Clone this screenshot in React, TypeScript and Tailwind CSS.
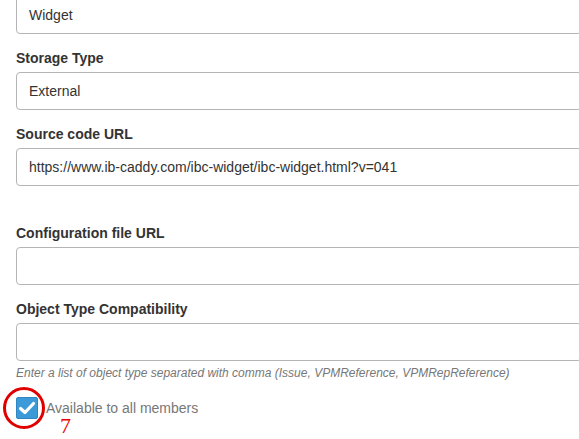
import React from "react";

function Field({ label, value, extraTop = false }: { label: string; value?: string; extraTop?: boolean }) {
  return (
    <div className={extraTop ? "mt-[37px]" : "mt-[14px]"}>
      <div className="text-[14px] leading-[20px] font-bold text-[#333]">{label}</div>
      <div className="mt-[4px] h-[38px] w-[566px] rounded-[4px] border border-[#b5b5b5] bg-white px-[12px] flex items-center text-[14px] text-[#333]">
        {value}
      </div>
    </div>
  );
}

export default function App() {
  return (
    <div
      className="w-[579px] h-[439px] overflow-hidden bg-white relative"
      style={{ fontFamily: '"Liberation Sans", Arial, sans-serif' }}
    >
      <div className="pl-[16px] mt-[-4px]">
        <div className="h-[38px] w-[566px] rounded-[4px] border border-[#b5b5b5] bg-white px-[12px] flex items-center text-[14px] text-[#333]">
          Widget
        </div>
        <Field label="Storage Type" value="External" />
        <Field label="Source code URL" value="https://www.ib-caddy.com/ibc-widget/ibc-widget.html?v=041" />
        <Field label="Configuration file URL" extraTop />
        <Field label="Object Type Compatibility" />
        <div className="mt-[4px] text-[12px] leading-[16px] italic text-[#777]">
          Enter a list of object type separated with comma (Issue, VPMReference, VPMRepReference)
        </div>
        <div className="mt-[16px] flex items-center">
          <div className="w-[22px] h-[22px] rounded-[2px] bg-[#3d9ad9] border border-[#2f86c4] flex items-center justify-center">
            <svg width="20" height="20" viewBox="0 0 20 20">
              <path d="M3.5 10.5 L8 14.5 L16.5 5.5" fill="none" stroke="white" strokeWidth="3.2" strokeLinecap="round" strokeLinejoin="round" />
            </svg>
          </div>
          <span className="ml-[8px] text-[14px] leading-[16px] text-[#777]">Available to all members</span>
        </div>
      </div>
      <div className="absolute left-[3px] top-[387px] w-[42px] h-[42px] rounded-full border-[3px] border-[#e00000]" />
      <div
        className="absolute left-[60px] top-[417px] text-[22px] leading-[17px] text-[#ee0000]"
        style={{ fontFamily: '"Liberation Serif", "Times New Roman", serif' }}
      >
        7
      </div>
    </div>
  );
}
